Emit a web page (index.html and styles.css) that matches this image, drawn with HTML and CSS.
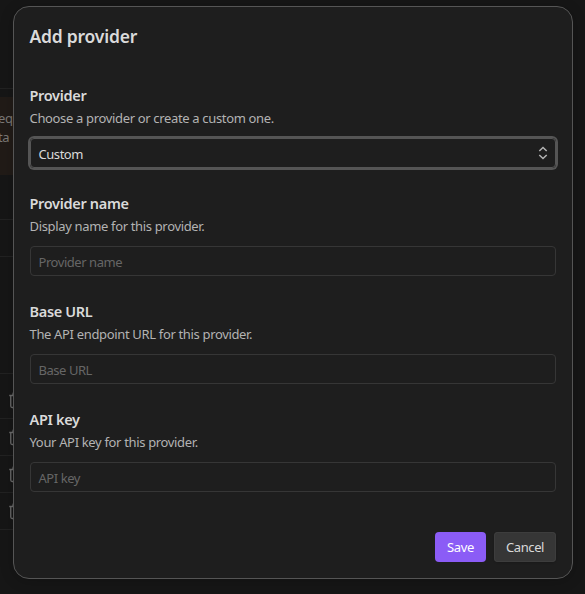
FILE: index.html
```html
<!DOCTYPE html>
<html lang="en">
<head>
<meta charset="utf-8">
<title>Add provider</title>
<link rel="stylesheet" href="styles.css">
</head>
<body>
<svg width="0" height="0" class="defs">
  <symbol id="trash" viewBox="0 0 24 24"><path d="M3 6h18M19 6v14a2 2 0 0 1-2 2H7a2 2 0 0 1-2-2V6M8 6V4a2 2 0 0 1 2-2h4a2 2 0 0 1 2 2v2M10 11v6M14 11v6"/></symbol>
</svg>
<main class="page">
  <div class="rule"></div>
  <div class="notice"><span>eq</span><span>ta</span></div>
  <div class="section"></div>
  <div class="section short"></div>
  <div class="section tall"></div>
  <div class="row first"><svg><use href="#trash"/></svg></div>
  <div class="row"><svg><use href="#trash"/></svg></div>
  <div class="row"><svg><use href="#trash"/></svg></div>
  <div class="row"><svg><use href="#trash"/></svg></div>
</main>
<div class="modal" role="dialog">
  <h1 class="title">Add provider</h1>
  <div class="field">
    <div class="name">Provider</div>
    <div class="desc">Choose a provider or create a custom one.</div>
    <div class="control select"><span>Custom</span>
      <svg class="chevrons" viewBox="0 0 10 14"><path d="M1.300 5 5 1.500 8.700 5M1.300 9 5 12.500 8.700 9"/></svg>
    </div>
  </div>
  <div class="field">
    <div class="name">Provider name</div>
    <div class="desc">Display name for this provider.</div>
    <div class="control"><span>Provider name</span></div>
  </div>
  <div class="field">
    <div class="name">Base URL</div>
    <div class="desc">The API endpoint URL for this provider.</div>
    <div class="control"><span>Base URL</span></div>
  </div>
  <div class="field">
    <div class="name">API key</div>
    <div class="desc">Your API key for this provider.</div>
    <div class="control"><span>API key</span></div>
  </div>
  <div class="buttons">
    <button class="save">Save</button>
    <button class="cancel">Cancel</button>
  </div>
</div>
</body>
</html>
```
FILE: styles.css
```css
* { box-sizing: border-box; }
body {
  margin: 0;
  width: 585px;
  height: 594px;
  overflow: hidden;
  position: relative;
  background: #161616;
  color: #dadada;
  font: 13px/20px "Noto Sans", "Open Sans", sans-serif;
}
.defs { position: absolute; }
.page { width: 400px; padding-top: 88px; }
.rule { height: 9px; border-top: 1px solid #222; }
.notice {
  height: 78px;
  padding-top: 12px;
  background: #211b17;
  color: #7c7976;
  line-height: 19px;
  letter-spacing: -0.35px;
}
.notice span { display: block; margin-left: -2px; }
.section { height: 45px; border-bottom: 1px solid #222; }
.section.short { height: 37px; }
.section.tall { height: 117px; }
.row { height: 37px; padding: 9px 0 0 7px; border-bottom: 1px solid #222; }
.row.first { height: 45px; padding-top: 17px; }
.row svg { display: block; width: 18px; height: 18px; fill: none; stroke: #6c6c6c; stroke-width: 1.75; }
.modal {
  position: absolute;
  left: 13px;
  top: 6px;
  width: 560px;
  height: 573px;
  padding: 18px 15.5px 15px;
  border: 1px solid #555;
  border-radius: 16px;
  background: #1e1e1e;
  box-shadow: 0 2px 14px rgba(0, 0, 0, .2);
}
.title { margin: 0 0 36px; font-size: 17.5px; line-height: 23px; font-weight: 600; letter-spacing: -0.22px; }
.field { height: 108px; }
.name { font-size: 14.5px; line-height: 22px; font-weight: 600; letter-spacing: -0.32px; }
.desc { margin-top: 1px; color: #b3b3b3; font-size: 13px; line-height: 22px; letter-spacing: -0.34px; }
.control {
  display: flex;
  align-items: center;
  justify-content: space-between;
  height: 30px;
  margin: 9px 0.5px 0;
  padding: 2px 7.5px 0;
  border: 1px solid #363636;
  border-radius: 4px;
  color: #666;
  font-size: 13px;
  letter-spacing: -0.45px;
}
.select { border-color: #555; box-shadow: 0 0 0 2px #555; color: #dadada; }
.chevrons { width: 10px; height: 14px; margin-top: -3px; fill: none; stroke: #b3b3b3; stroke-width: 1.5; }
.buttons { display: flex; justify-content: flex-end; gap: 8px; margin: 16px 0.5px 0; }
button {
  height: 30px;
  padding: 0;
  border: 0;
  border-radius: 4px;
  font: 13px "Noto Sans", "Open Sans", sans-serif;
  letter-spacing: -0.4px;
}
.save { width: 51px; background: #8b5cf6; color: #fff; }
.cancel { width: 62px; background: #363636; color: #dadada; box-shadow: inset 0 0 0 1px #3d3d3d, 0 1px 2px rgba(0, 0, 0, .15); }
```
